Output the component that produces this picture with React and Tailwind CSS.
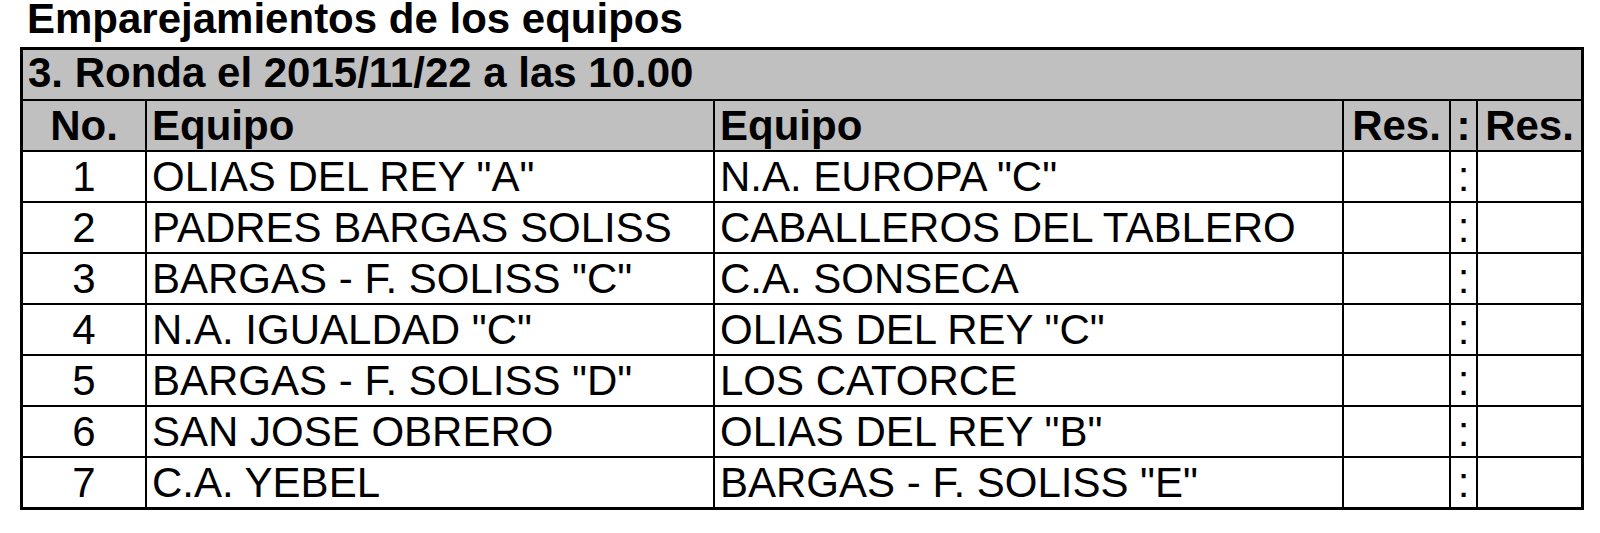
import React from "react";

const rows = [
  ["1", 'OLIAS DEL REY "A"', 'N.A. EUROPA "C"'],
  ["2", "PADRES BARGAS SOLISS", "CABALLEROS DEL TABLERO"],
  ["3", 'BARGAS - F. SOLISS "C"', "C.A. SONSECA"],
  ["4", 'N.A. IGUALDAD "C"', 'OLIAS DEL REY "C"'],
  ["5", 'BARGAS - F. SOLISS "D"', "LOS CATORCE"],
  ["6", "SAN JOSE OBRERO", 'OLIAS DEL REY "B"'],
  ["7", "C.A. YEBEL", 'BARGAS - F. SOLISS "E"'],
];

export default function App() {
  return (
    <div className="w-[1600px] h-[533px] bg-white text-black font-['Liberation_Sans',Arial,sans-serif] text-[42px]">
      <h1 className="h-[47px] leading-[38px] pl-[27px] font-bold whitespace-nowrap">
        Emparejamientos de los equipos
      </h1>

      <div className="ml-[20px] w-[1564px] border-[3px] border-black bg-black grid grid-cols-[122px_566px_627px_105px_25px_103px] auto-rows-[49px] gap-[2px] leading-[49px] whitespace-nowrap">
        <div className="col-span-6 bg-[#c0c0c0] font-bold pl-[5px] leading-[45px]">
          3. Ronda el 2015/11/22 a las 10.00
        </div>

        <div className="bg-[#c0c0c0] font-bold text-center">No.</div>
        <div className="bg-[#c0c0c0] font-bold pl-[5px]">Equipo</div>
        <div className="bg-[#c0c0c0] font-bold pl-[5px]">Equipo</div>
        <div className="bg-[#c0c0c0] font-bold text-center">Res.</div>
        <div className="bg-[#c0c0c0] font-bold text-center">:</div>
        <div className="bg-[#c0c0c0] font-bold text-center">Res.</div>

        {rows.map(([n, a, b]) => (
          <React.Fragment key={n}>
            <div className="bg-white text-center">{n}</div>
            <div className="bg-white pl-[5px] overflow-hidden">{a}</div>
            <div className="bg-white pl-[5px] overflow-hidden">{b}</div>
            <div className="bg-white"></div>
            <div className="bg-white text-center">:</div>
            <div className="bg-white"></div>
          </React.Fragment>
        ))}
      </div>
    </div>
  );
}
